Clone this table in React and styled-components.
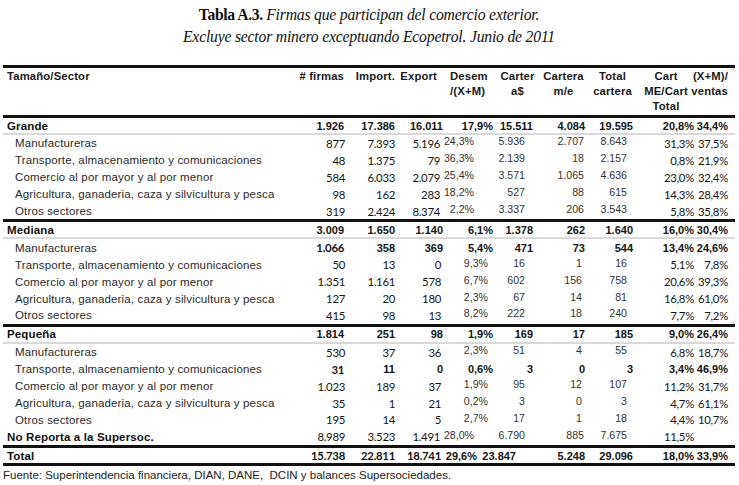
import React from "react";
import styled, { createGlobalStyle } from "styled-components";

const GlobalStyle = createGlobalStyle`
  html, body {
    margin: 0;
    padding: 0;
    background: #ffffff;
  }
`;

const COLS = "297px 45px 50px 48px 50px 40px 52px 48px 64px 31px";
const ARIAL = `"Liberation Sans", Arial, sans-serif`;
const CALIBRI = `Lato, "Open Sans", sans-serif`;

const Page = styled.div`
  width: 739px;
  height: 485px;
  padding: 4px 4px 0 3px;
  box-sizing: border-box;
  background: #fff;
  color: #1a1a1a;
  overflow: hidden;
`;

const Caption = styled.div`
  font-family: "Liberation Serif", "Times New Roman", serif;
  font-size: 15.7px;
  line-height: 22px;
  text-align: center;
  color: #111;
  margin-bottom: 17px;
`;

const CaptionLine = styled.div`
  font-style: italic;
  letter-spacing: -0.2px;
`;

const TableNo = styled.span`
  font-style: normal;
  font-weight: 700;
  letter-spacing: -0.4px;
`;

const Table = styled.div`
  width: 732px;
  border-top: 3px solid #111;
`;

const HeaderRow = styled.div`
  display: grid;
  grid-template-columns: ${COLS};
  height: 47px;
  border-bottom: 3px solid #111;
`;

const HeadCell = styled.div`
  display: flex;
  flex-direction: column;
  align-items: ${(p) => p.$align || "flex-end"};
  padding-left: ${(p) => p.$pl || 0}px;
  padding-right: ${(p) => p.$pr || 0}px;
  padding-top: 1px;
  font-family: ${ARIAL};
  font-weight: 700;
  font-size: 11.3px;
  line-height: 15px;
  letter-spacing: 0.15px;
  white-space: nowrap;
`;

const Row = styled.div`
  display: grid;
  grid-template-columns: ${COLS};
  height: ${(p) => p.$h}px;
  border-bottom: ${(p) =>
    p.$line === "black"
      ? "3px solid #111"
      : p.$line === "gray"
      ? "2px solid #d9d9d9"
      : "none"};
`;

const Label = styled.div`
  display: flex;
  align-items: center;
  padding-left: ${(p) => (p.$indent ? 12 : 4)}px;
  font-family: ${ARIAL};
  font-size: 11.5px;
  font-weight: ${(p) => (p.$bold ? 700 : 400)};
  letter-spacing: 0.15px;
  color: ${(p) => (p.$bold ? "#111" : "#2a2a2a")};
  white-space: nowrap;
`;

const sizeOf = (p) => {
  if (p.$face === "cal") return 11.4;
  if (p.$raised) return 10.6;
  return 11;
};

const Cell = styled.div`
  display: flex;
  justify-content: flex-end;
  align-items: center;
  padding-right: ${(p) => p.$pr || 0}px;
  padding-bottom: ${(p) => (p.$raised ? 4 : 0)}px;
  font-family: ${(p) => (p.$face === "cal" ? CALIBRI : ARIAL)};
  font-size: ${sizeOf}px;
  letter-spacing: ${(p) => (p.$face === "cal" ? "-0.3px" : "0")};
  font-weight: ${(p) => (p.$bold ? 700 : 400)};
  color: ${(p) => (p.$face === "cal" || p.$bold ? "#151515" : "#333")};
  white-space: nowrap;
`;

const Footnote = styled.div`
  font-family: ${ARIAL};
  font-size: 11.5px;
  line-height: 16px;
  white-space: pre;
  color: #222;
  padding-top: 1px;
`;

const HEAD = [
  { lines: ["Tamaño/Sector"], align: "flex-start", pl: 4 },
  { lines: ["# firmas"], pr: 1 },
  { lines: ["Import."] },
  { lines: ["Export"], pr: 6 },
  { lines: ["Desem", "/(X+M)"], align: "flex-start", pl: 7 },
  { lines: ["Carter", "a$"], align: "center", pl: 9 },
  { lines: ["Cartera", "m/e"], align: "center", pl: 9 },
  { lines: ["Total", "cartera"], align: "center", pl: 7 },
  { lines: ["Cart", "ME/Cart", "Total"], align: "center", pl: 4, pr: 2 },
  { lines: ["(X+M)/", "ventas"] },
];

// face per numeric column for ordinary rows: cal = Calibri-like, ari = Arial
const FACES = ["cal", "cal", "cal", "ari", "ari", "ari", "ari", "cal", "cal"];

// right padding per numeric column, by row kind
const PAD = {
  group: [1, 0, 0, 0, 0, 0, 0, 3, 0],
  subA: [0, 0, 3, 19, 8, 1, 6, 3, 0],
  subB: [0, 0, 2, 5, 8, 3, 6, 3, 0],
  boldSub: [1, 0, 0, 0, 0, 0, 0, 3, 0],
  other: [0, 0, 3, 19, 8, 1, 6, 3, 0],
  total: [0, 0, 2, 16, 17, 0, 0, 3, 0],
};

const ROWS = [
  { kind: "group", label: "Grande", line: "gray", v: ["1.926", "17.386", "16.011", "17,9%", "15.511", "4.084", "19.595", "20,8%", "34,4%"] },
  { kind: "subA", label: "Manufactureras", v: ["877", "7.393", "5.196", "24,3%", "5.936", "2.707", "8.643", "31,3%", "37,5%"] },
  { kind: "subA", label: "Transporte, almacenamiento y comunicaciones", v: ["48", "1.375", "79", "36,3%", "2.139", "18", "2.157", "0,8%", "21,9%"] },
  { kind: "subA", label: "Comercio al por mayor y al por menor", v: ["584", "6.033", "2.079", "25,4%", "3.571", "1.065", "4.636", "23,0%", "32,4%"] },
  { kind: "subA", label: "Agricultura, ganaderia, caza y silvicultura y pesca", v: ["98", "162", "283", "18,2%", "527", "88", "615", "14,3%", "28,4%"] },
  { kind: "subA", label: "Otros sectores", line: "black", v: ["319", "2.424", "8.374", "2,2%", "3.337", "206", "3.543", "5,8%", "35,8%"] },
  { kind: "group", label: "Mediana", line: "gray", v: ["3.009", "1.650", "1.140", "6,1%", "1.378", "262", "1.640", "16,0%", "30,4%"] },
  { kind: "boldSub", label: "Manufactureras", v: ["1.066", "358", "369", "5,4%", "471", "73", "544", "13,4%", "24,6%"] },
  { kind: "subB", label: "Transporte, almacenamiento y comunicaciones", v: ["50", "13", "0", "9,3%", "16", "1", "16", "5,1%", "7,8%"] },
  { kind: "subB", label: "Comercio al por mayor y al por menor", v: ["1.351", "1.161", "578", "6,7%", "602", "156", "758", "20,6%", "39,3%"] },
  { kind: "subB", label: "Agricultura, ganaderia, caza y silvicultura y pesca", v: ["127", "20", "180", "2,3%", "67", "14", "81", "16,8%", "61,0%"] },
  { kind: "subB", label: "Otros sectores", line: "black", v: ["415", "98", "13", "8,2%", "222", "18", "240", "7,7%", "7,2%"] },
  { kind: "group", label: "Pequeña", line: "gray", v: ["1.814", "251", "98", "1,9%", "169", "17", "185", "9,0%", "26,4%"] },
  { kind: "subB", label: "Manufactureras", v: ["530", "37", "36", "2,3%", "51", "4", "55", "6,8%", "18,7%"] },
  { kind: "boldSub", label: "Transporte, almacenamiento y comunicaciones", v: ["31", "11", "0", "0,6%", "3", "0", "3", "3,4%", "46,9%"] },
  { kind: "subB", label: "Comercio al por mayor y al por menor", v: ["1.023", "189", "37", "1,9%", "95", "12", "107", "11,2%", "31,7%"] },
  { kind: "subB", label: "Agricultura, ganaderia, caza y silvicultura y pesca", v: ["35", "1", "21", "0,2%", "3", "0", "3", "4,7%", "61,1%"] },
  { kind: "subB", label: "Otros sectores", v: ["195", "14", "5", "2,7%", "17", "1", "18", "4,4%", "10,7%"] },
  { kind: "other", label: "No Reporta a la Supersoc.", line: "black", v: ["8.989", "3.523", "1.491", "28,0%", "6.790", "885", "7.675", "11,5%", ""] },
  { kind: "total", label: "Total", line: "black", v: ["15.738", "22.811", "18.741", "29,6%", "23.847", "5.248", "29.096", "18,0%", "33,9%"] },
];

function cellProps(kind, i) {
  const pr = PAD[kind][i];
  if (kind === "group") return { $face: "ari", $bold: true, $pr: pr };
  if (kind === "boldSub") return { $face: i === 0 ? "cal" : "ari", $bold: true, $pr: pr };
  if (kind === "total") return { $face: i < 3 ? "cal" : "ari", $bold: true, $pr: pr };
  const face = FACES[i];
  return { $face: face, $raised: face === "ari", $pr: pr };
}

function rowHeight(kind) {
  if (kind === "group" || kind === "total") return 15;
  return 16.9;
}

export default function App() {
  return (
    <Page>
      <GlobalStyle />
      <Caption>
        <CaptionLine>
          <TableNo>Tabla A.3. </TableNo>Firmas que participan del comercio exterior.
        </CaptionLine>
        <CaptionLine>Excluye sector minero exceptuando Ecopetrol. Junio de 2011</CaptionLine>
      </Caption>
      <Table>
        <HeaderRow>
          {HEAD.map((h, i) => (
            <HeadCell key={i} $align={h.align} $pl={h.pl} $pr={h.pr}>
              {h.lines.map((l) => (
                <span key={l}>{l}</span>
              ))}
            </HeadCell>
          ))}
        </HeaderRow>
        {ROWS.map((r, ri) => {
          const groupLabel = r.kind === "group" || r.kind === "other" || r.kind === "total";
          return (
            <Row key={ri} $h={rowHeight(r.kind)} $line={r.line}>
              <Label $indent={!groupLabel} $bold={groupLabel}>
                {r.label}
              </Label>
              {r.v.map((val, i) => (
                <Cell key={i} {...cellProps(r.kind, i)}>
                  {val}
                </Cell>
              ))}
            </Row>
          );
        })}
      </Table>
      <Footnote>Fuente: Superintendencia financiera, DIAN, DANE,  DCIN y balances Supersociedades.</Footnote>
    </Page>
  );
}
